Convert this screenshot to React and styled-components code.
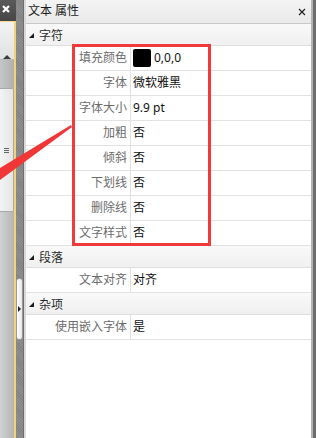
import React from 'react'
import styled, { createGlobalStyle } from 'styled-components'

const GlobalStyle = createGlobalStyle`
  html, body {
    margin: 0;
    padding: 0;
    overflow: hidden;
  }
  body {
    font-family: "Noto Sans", "Noto Sans CJK SC", sans-serif;
  }
`

const Frame = styled.div`
  position: relative;
  display: flex;
  width: 316px;
  height: 438px;
  background: #fff;
  overflow: hidden;
`

const Dock = styled.div`
  display: flex;
  width: 26px;
  flex-shrink: 0;
`

const DockPane = styled.div`
  display: flex;
  flex-direction: column;
  width: 16px;
`

const DockHeader = styled.div`
  height: 21px;
  display: flex;
  align-items: flex-start;
  padding: 5px 0 0 2px;
  box-sizing: border-box;
  background: linear-gradient(#5a5a5a, #464646);
`

const DockBody = styled.div`
  flex: 1;
  display: flex;
  border-top: 1px solid #f6d98a;
  border-right: 2px solid #f2d27a;
`

const ScrollTrack = styled.div`
  flex: 1;
  display: flex;
  flex-direction: column;
  background: linear-gradient(90deg, #d2d2d2, #b4b4b4);
`

const ScrollArrow = styled.div`
  height: 38px;
  display: flex;
  justify-content: center;
  padding-top: 6px;
  box-sizing: border-box;
  background: linear-gradient(#f2f2f2, #e2e2e2);
  border-bottom: 1px solid #b8b8b8;

  &::before {
    content: '';
    border-left: 4px solid transparent;
    border-right: 4px solid transparent;
    border-bottom: 4px solid #3c3c3c;
  }
`

const ScrollGap = styled.div`
  height: 28px;
  background: linear-gradient(90deg, #c6c6c6, #b0b0b0);
`

const ScrollThumb = styled.div`
  height: 124px;
  display: flex;
  align-items: center;
  justify-content: center;
  background: linear-gradient(90deg, #f4f4f4, #e4e4e4);
  border: 1px solid #a8a8a8;
  border-left: none;
  border-radius: 0 2px 2px 0;
  box-sizing: border-box;
`

const Grip = styled.div`
  width: 5px;
  height: 5px;
  background: repeating-linear-gradient(#666 0 1px, transparent 1px 2px);
`

const Splitter = styled.div`
  width: 8px;
  display: flex;
  flex-direction: column;
  align-items: center;
  padding-top: 278px;
  box-sizing: border-box;
  background: repeating-linear-gradient(45deg, #8e8e8e 0 1px, #838383 1px 2px);
  border-right: 1px solid #6e6e6e;
`

const SplitterTab = styled.div`
  width: 5px;
  height: 60px;
  display: flex;
  align-items: center;
  justify-content: center;
  background: linear-gradient(90deg, #ffffff, #e6e6e6);
  border: 1px solid #9a9a9a;
  border-radius: 3px;

  &::before {
    content: '';
    border-top: 3px solid transparent;
    border-bottom: 3px solid transparent;
    border-left: 3px solid #222;
  }
`

const DockEdge = styled.div`
  width: 2px;
  background: #d9d9d9;
`

const Panel = styled.div`
  flex: 1;
  display: flex;
  flex-direction: column;
  border-right: 2px solid #b4b4b4;
`

const TitleBar = styled.div`
  height: 24px;
  display: flex;
  align-items: center;
  justify-content: space-between;
  padding: 0 5px 0 2px;
  box-sizing: border-box;
  background: linear-gradient(#f4f4f4, #e9e9e9);
  border-bottom: 1px solid #c8c8c8;
`

const Title = styled.span`
  font-size: 12px;
  line-height: 16px;
  color: #1c1c1c;
  margin-top: -2px;
`

const Grid = styled.div`
  position: relative;
  display: flex;
  flex-direction: column;
`

const Category = styled.div`
  height: 22px;
  display: flex;
  align-items: center;
  gap: 5px;
  padding-left: 3px;
  box-sizing: border-box;
  font-size: 12px;
  color: #2c2c2c;
  background: linear-gradient(#f9f9f9, #f0f0f0);
  border-bottom: 1px solid #dedede;

  &::before {
    content: '';
    margin-top: 1px;
    border-top: 5px solid transparent;
    border-right: 5px solid #1a1a1a;
  }
`

const Row = styled.div`
  height: 25px;
  display: grid;
  grid-template-columns: 105px 1fr;
  box-sizing: border-box;
  border-bottom: 1px solid #e2e2e2;
  font-size: 12px;
  line-height: 16px;
`

const Name = styled.div`
  display: flex;
  align-items: center;
  justify-content: flex-end;
  padding-right: 3px;
  color: #6c6c6c;
  border-right: 1px solid #e2e2e2;
`

const Value = styled.div`
  display: flex;
  align-items: center;
  gap: 3px;
  padding-left: 2px;
  color: #111;
`

const Swatch = styled.span`
  width: 18px;
  height: 18px;
  border-radius: 2px;
  background: ${({ color }) => color};
`

const Highlight = styled.div`
  position: absolute;
  left: 46px;
  top: 20px;
  width: 139px;
  height: 202px;
  border: 3px solid #f23a3a;
  box-sizing: border-box;
  pointer-events: none;
`

const RightEdge = styled.div`
  width: 3px;
  background: #6e6e6e;
`

const Annotation = styled.svg`
  position: absolute;
  left: 0;
  top: 0;
  pointer-events: none;
`

const CloseIcon = ({ color, size, weight }) => (
  <svg width={size} height={size} viewBox="0 0 8 8">
    <path d="M1 1 L7 7 M7 1 L1 7" stroke={color} strokeWidth={weight} />
  </svg>
)

const sections = [
  {
    title: '字符',
    rows: [
      { name: '填充颜色', value: '0,0,0', swatch: '#000' },
      { name: '字体', value: '微软雅黑' },
      { name: '字体大小', value: '9.9 pt' },
      { name: '加粗', value: '否' },
      { name: '倾斜', value: '否' },
      { name: '下划线', value: '否' },
      { name: '删除线', value: '否' },
      { name: '文字样式', value: '否' },
    ],
  },
  { title: '段落', rows: [{ name: '文本对齐', value: '对齐' }] },
  { title: '杂项', rows: [{ name: '使用嵌入字体', value: '是' }] },
]

const App = () => {
  return (
    <Frame>
      <GlobalStyle />
      <Dock>
        <DockPane>
          <DockHeader>
            <CloseIcon color="#fff" size={8} weight={2.2} />
          </DockHeader>
          <DockBody>
            <ScrollTrack>
              <ScrollArrow />
              <ScrollGap />
              <ScrollThumb>
                <Grip />
              </ScrollThumb>
            </ScrollTrack>
          </DockBody>
        </DockPane>
        <Splitter>
          <SplitterTab />
        </Splitter>
        <DockEdge />
      </Dock>

      <Panel>
        <TitleBar>
          <Title>文本 属性</Title>
          <CloseIcon color="#222" size={8} weight={1.2} />
        </TitleBar>
        <Grid>
          {sections.map((section) => (
            <React.Fragment key={section.title}>
              <Category>{section.title}</Category>
              {section.rows.map((row) => (
                <Row key={row.name}>
                  <Name>{row.name}</Name>
                  <Value>
                    {row.swatch && <Swatch color={row.swatch} />}
                    {row.value}
                  </Value>
                </Row>
              ))}
            </React.Fragment>
          ))}
          <Highlight />
        </Grid>
      </Panel>
      <RightEdge />

      <Annotation width="80" height="200">
        <polygon points="71,125 72,127 0,180 0,168" fill="#f03636" />
      </Annotation>
    </Frame>
  )
}

export default App
